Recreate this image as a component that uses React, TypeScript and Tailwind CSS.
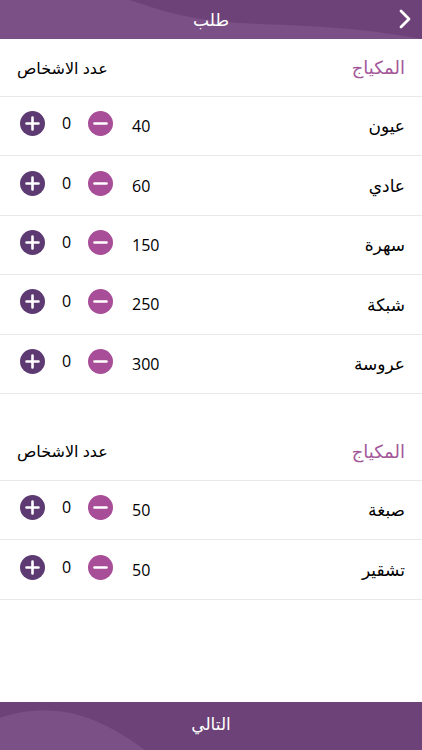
import React, { useState } from 'react';

const font = { fontFamily: '"Open Sans", "DejaVu Sans", sans-serif' };

type Item = { name: string; price: number };

const sections: Item[][] = [
  [
    { name: 'عيون', price: 40 },
    { name: 'عادي', price: 60 },
    { name: 'سهرة', price: 150 },
    { name: 'شبكة', price: 250 },
    { name: 'عروسة', price: 300 },
  ],
  [
    { name: 'صبغة', price: 50 },
    { name: 'تشقير', price: 50 },
  ],
];

function PlusIcon() {
  return (
    <svg width="25" height="25" viewBox="0 0 25 25">
      <circle cx="12.5" cy="12.5" r="12.5" fill="#5e3a73" />
      <path d="M12.5 6.5v12M6.5 12.5h12" stroke="#fff" strokeWidth="2.6" strokeLinecap="round" />
    </svg>
  );
}

function MinusIcon() {
  return (
    <svg width="25" height="25" viewBox="0 0 25 25">
      <circle cx="12.5" cy="12.5" r="12.5" fill="#a84d98" />
      <path d="M6.5 12.5h12" stroke="#fff" strokeWidth="2.6" strokeLinecap="round" />
    </svg>
  );
}

function Row({ item, count, onAdd, onRemove }: { item: Item; count: number; onAdd: () => void; onRemove: () => void }) {
  return (
    <div className="h-[59.4px] border-b border-[#e9e9e9] flex items-center pl-[20px] pr-[17px]">
      <button onClick={onAdd} className="w-[25px] h-[25px] -mt-[5px]">
        <PlusIcon />
      </button>
      <span className="w-[43px] text-center text-[16px] text-black -mt-[6px]">{count}</span>
      <button onClick={onRemove} className="w-[25px] h-[25px] -mt-[5px]">
        <MinusIcon />
      </button>
      <span className="ml-[19px] text-[16px] text-black">{item.price}</span>
      <span className="flex-1 text-right text-[17px] text-black" dir="rtl">{item.name}</span>
    </div>
  );
}

function SectionHeader() {
  return (
    <div className="h-[58px] border-b border-[#e9e9e9] flex items-center justify-between pl-[17px] pr-[17px]">
      <span className="text-[16px] font-medium text-black" dir="rtl">عدد الاشخاص</span>
      <span className="text-[18px] text-[#a4589a]" dir="rtl">المكياج</span>
    </div>
  );
}

export default function App() {
  const [counts, setCounts] = useState<number[][]>(sections.map(s => s.map(() => 0)));

  const change = (si: number, ii: number, d: number) => {
    setCounts(prev =>
      prev.map((s, a) => (a === si ? s.map((c, b) => (b === ii ? Math.max(0, c + d) : c)) : s))
    );
  };

  return (
    <div className="w-[422px] h-[750px] bg-white flex flex-col" style={font}>
      {/* Header */}
      <div className="relative h-[39px] bg-[#6c4278] overflow-hidden flex items-center justify-center">
        <svg className="absolute inset-0" width="422" height="39" viewBox="0 0 422 39">
          <path d="M0 0 L130 0 C170 14 200 22 260 24 C320 26 360 28 422 39 L0 39 Z" fill="#7a5086" />
        </svg>
        <span className="relative text-white text-[17px]" dir="rtl">طلب</span>
        <button className="absolute right-[8px] top-[9px] w-[18px] h-[20px]">
          <svg width="18" height="20" viewBox="0 0 18 20">
            <path d="M5 2 L13 10 L5 18" fill="none" stroke="#fff" strokeWidth="2.8" strokeLinecap="round" strokeLinejoin="round" />
          </svg>
        </button>
      </div>

      {/* Content */}
      <div className="flex-1 flex flex-col">
        {sections.map((items, si) => (
          <div key={si} className={si > 0 ? 'mt-[29px]' : ''}>
            <SectionHeader />
            {items.map((item, ii) => (
              <Row
                key={ii}
                item={item}
                count={counts[si][ii]}
                onAdd={() => change(si, ii, 1)}
                onRemove={() => change(si, ii, -1)}
              />
            ))}
          </div>
        ))}
      </div>

      {/* Footer */}
      <button className="relative h-[48px] bg-[#6c4278] overflow-hidden flex items-center justify-center">
        <svg className="absolute inset-0" width="422" height="48" viewBox="0 0 422 48">
          <path d="M0 16 C20 8 50 6 75 12 C105 20 125 34 145 48 L0 48 Z" fill="#7a5086" />
        </svg>
        <span className="relative text-white text-[17px] -mt-[4px]" dir="rtl">التالي</span>
      </button>
    </div>
  );
}
